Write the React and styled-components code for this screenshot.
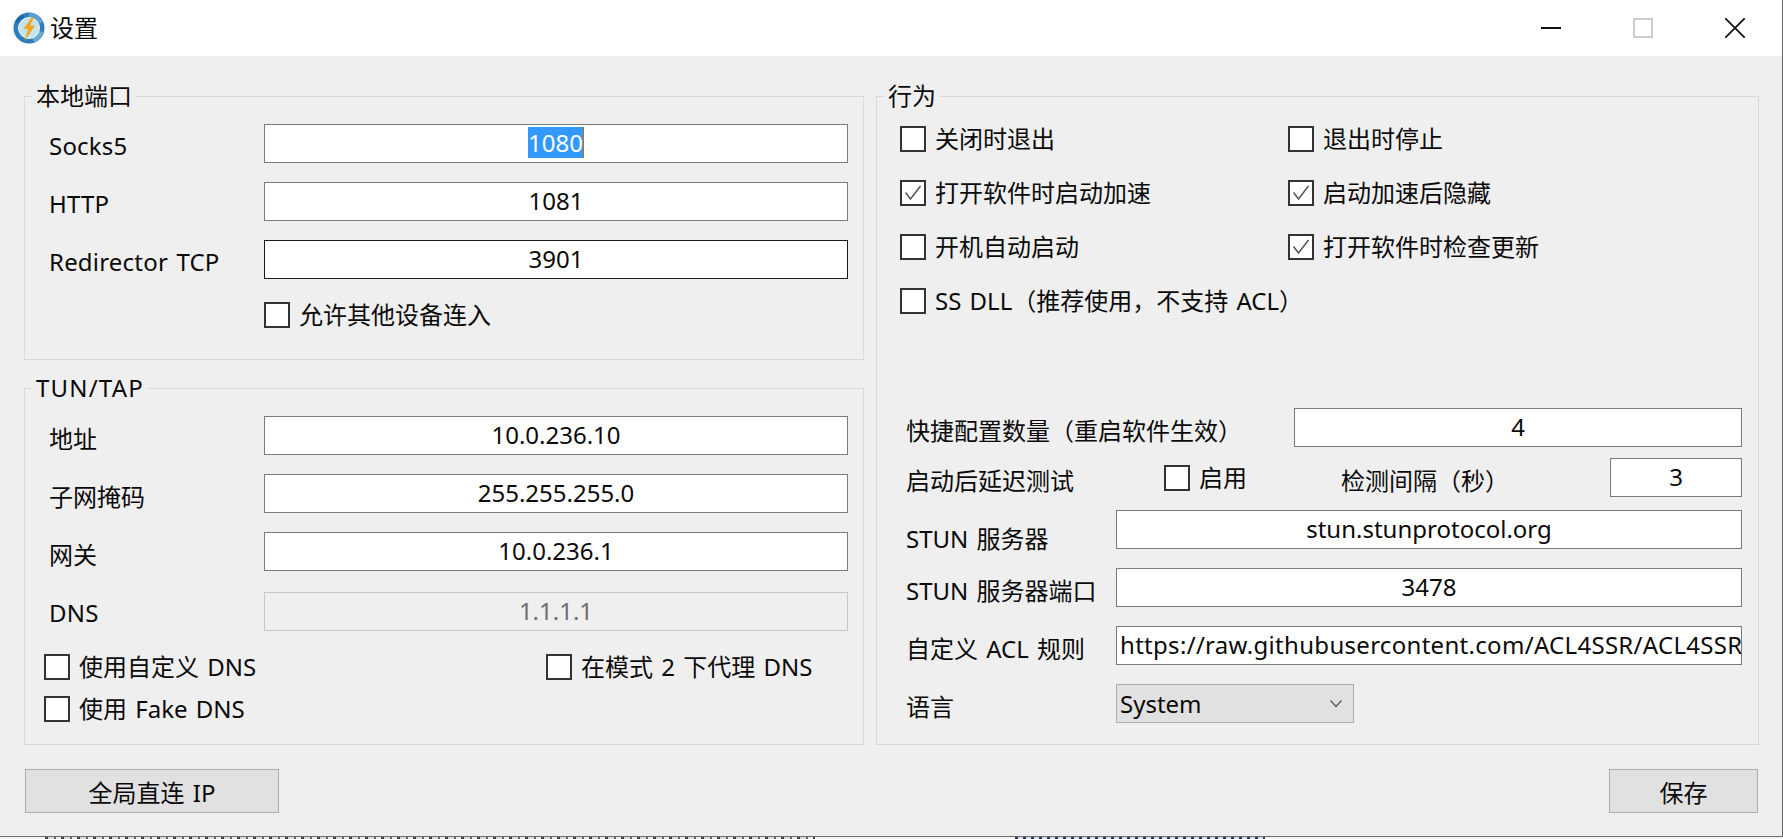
import React from 'react'
import styled, { createGlobalStyle } from 'styled-components'

const GlobalStyle = createGlobalStyle`
  html, body {
    margin: 0;
    height: 100%;
    overflow: hidden;
    background: #fff;
  }
  body {
    font-family: "Noto Sans", "Noto Sans CJK SC", sans-serif;
    font-size: 24px;
    word-spacing: 2px;
    color: #0a0a0a;
  }
`

function AppIcon() {
  return (
    <svg width="34" height="34" viewBox="0 0 34 34">
      <circle cx="17" cy="17" r="15.5" fill="#2f7dbd" />
      <path d="M17 1.5 A15.5 15.5 0 0 1 31 11 L26 13 A10 10 0 0 0 17 7Z" fill="#5fa0d0" />
      <path d="M3 11 A15.5 15.5 0 0 1 11 3 L13 8 A10 10 0 0 0 8 13Z" fill="#1f6aa8" />
      <path d="M31.5 21 A15.5 15.5 0 0 1 22 31.5 L20 26.5 A10 10 0 0 0 26.5 20Z" fill="#6aa8d6" />
      <circle cx="17" cy="17" r="10.5" fill="#c3e4ea" stroke="#e4f3f5" />
      <path d="M19.5 6.5 L11.5 18 L16 18 L12.5 30 L23 14.5 L18 14.5 L22 6.5Z" fill="#f4a51f" />
    </svg>
  )
}

function Check({ checked }) {
  return (
    <Box>
      {checked && (
        <svg width="22" height="22" viewBox="0 0 22 22">
          <polyline points="3.5,10.5 8.5,17 18.5,4" fill="none" stroke="#555" strokeWidth="1.5" />
        </svg>
      )}
    </Box>
  )
}

function Option({ checked, children }) {
  return (
    <OptionRow>
      <Check checked={checked} />
      <OptionText>{children}</OptionText>
    </OptionRow>
  )
}

function App() {
  return (
    <>
      <GlobalStyle />
      <Window>
        <TitleBar>
          <AppIcon />
          <Title>设置</Title>
          <WinButtons>
            <WinButton>
              <svg width="20" height="20" viewBox="0 0 20 20"><path d="M0 10H20" stroke="#111" strokeWidth="2" /></svg>
            </WinButton>
            <WinButton>
              <svg width="20" height="20" viewBox="0 0 20 20"><rect x="1" y="1" width="18" height="18" fill="none" stroke="#ccc" strokeWidth="2" /></svg>
            </WinButton>
            <WinButton>
              <svg width="20" height="20" viewBox="0 0 20 20"><path d="M0 0L20 20M20 0L0 20" stroke="#111" strokeWidth="1.7" /></svg>
            </WinButton>
          </WinButtons>
        </TitleBar>

        <Content>
          <Columns>
            <LeftColumn>
              <Group $height="264px">
                <Legend>本地端口</Legend>
                <FormGrid>
                  <Label $latin>Socks5</Label>
                  <Field><Selected>1080</Selected></Field>
                  <Label $latin>HTTP</Label>
                  <Field>1081</Field>
                  <Label $latin>Redirector TCP</Label>
                  <Field $focus>3901</Field>
                  <span />
                  <LooseOption>
                    <Option>允许其他设备连入</Option>
                  </LooseOption>
                </FormGrid>
              </Group>
              <Group $height="357px">
                <Legend $latin>TUN/TAP</Legend>
                <FormGrid>
                  <Label>地址</Label>
                  <Field>10.0.236.10</Field>
                  <Label>子网掩码</Label>
                  <Field>255.255.255.0</Field>
                  <Label>网关</Label>
                  <Field>10.0.236.1</Field>
                  <Label $latin>DNS</Label>
                  <Field $disabled>1.1.1.1</Field>
                </FormGrid>
                <DnsOptions>
                  <Option>使用自定义 DNS</Option>
                  <Option>在模式 2 下代理 DNS</Option>
                  <Option>使用 Fake DNS</Option>
                </DnsOptions>
              </Group>
            </LeftColumn>

            <BehaviorGroup>
              <Legend>行为</Legend>
              <ChecksGrid>
                <Option>关闭时退出</Option>
                <Option>退出时停止</Option>
                <Option checked>打开软件时启动加速</Option>
                <Option checked>启动加速后隐藏</Option>
                <Option>开机自动启动</Option>
                <Option checked>打开软件时检查更新</Option>
                <Option>SS DLL（推荐使用，不支持 ACL）</Option>
              </ChecksGrid>
              <Settings>
                <SettingRow $col="388px">
                  <Label>快捷配置数量（重启软件生效）</Label>
                  <Field>4</Field>
                </SettingRow>
                <DelayRow>
                  <Label>启动后延迟测试</Label>
                  <Option>启用</Option>
                  <Label>检测间隔（秒）</Label>
                  <Field>3</Field>
                </DelayRow>
                <SettingRow $tight>
                  <Label $low>STUN 服务器</Label>
                  <Field>stun.stunprotocol.org</Field>
                </SettingRow>
                <SettingRow>
                  <Label>STUN 服务器端口</Label>
                  <Field>3478</Field>
                </SettingRow>
                <SettingRow>
                  <Label>自定义 ACL 规则</Label>
                  <Field $url>https://raw.githubusercontent.com/ACL4SSR/ACL4SSR</Field>
                </SettingRow>
                <SettingRow>
                  <Label>语言</Label>
                  <Select>
                    <span>System</span>
                    <svg width="12" height="8" viewBox="0 0 12 8">
                      <polyline points="0.5,0.5 6,6.5 11.5,0.5" fill="none" stroke="#555" strokeWidth="1.2" />
                    </svg>
                  </Select>
                </SettingRow>
              </Settings>
            </BehaviorGroup>
          </Columns>
          <Footer>
            <ActionButton $width="254px">全局直连 IP</ActionButton>
            <ActionButton $width="149px">保存</ActionButton>
          </Footer>
        </Content>
      </Window>
      <BehindStrip />
    </>
  )
}

export default App

const Window = styled.div`
  width: 1782px;
  height: 836px;
  display: flex;
  flex-direction: column;
  border-right: 1px solid #666;
  border-bottom: 1px solid #6d6d6d;
`

const TitleBar = styled.header`
  height: 56px;
  flex: none;
  display: flex;
  align-items: center;
  padding-left: 12px;
  background: #fff;
`

const Title = styled.div`
  margin-left: 4px;
  line-height: 34px;
`

const WinButtons = styled.div`
  margin-left: auto;
  padding-right: 1px;
  display: flex;
`

const WinButton = styled.div`
  width: 92px;
  height: 56px;
  display: flex;
  align-items: center;
  justify-content: center;
`

const Content = styled.main`
  flex: 1;
  background: #efefef;
  padding: 40px 23px 0 24px;
  display: flex;
  flex-direction: column;
`

const Columns = styled.div`
  display: grid;
  grid-template-columns: 840px 883px;
  column-gap: 12px;
  height: 649px;
`

const LeftColumn = styled.div`
  display: flex;
  flex-direction: column;
  justify-content: space-between;
`

const Group = styled.section`
  position: relative;
  box-sizing: border-box;
  height: ${p => p.$height};
  border: 1px solid #d9d9d9;
  padding: 27px 14px 0 24px;
`

const BehaviorGroup = styled(Group)`
  height: 649px;
  padding: 29px 15px 21px 23px;
  display: flex;
  flex-direction: column;
`

const Legend = styled.div`
  position: absolute;
  top: -18px;
  left: 7px;
  padding: 0 4px;
  line-height: 34px;
  letter-spacing: ${p => (p.$latin ? '1.2px' : '0')};
  background: #efefef;
`

const FormGrid = styled.div`
  display: grid;
  grid-template-columns: 215px 584px;
  row-gap: 19px;
  align-items: center;
`

const Label = styled.div`
  white-space: nowrap;
  padding-top: ${p => (p.$low ? '9px' : '3px')};
  margin-bottom: ${p => (p.$low ? '-6px' : '0')};
  letter-spacing: ${p => (p.$latin ? '.2px' : '0')};
`

const Field = styled.div`
  box-sizing: border-box;
  height: 39px;
  min-width: 0;
  margin-top: ${p => (p.$disabled ? '2px' : '0')};
  background: ${p => (p.$disabled ? '#efefef' : '#fff')};
  border: 1px solid ${p => (p.$focus ? '#1a1a1a' : p.$disabled ? '#c6c6c6' : '#7a7a7a')};
  color: ${p => (p.$disabled ? '#6d6d6d' : 'inherit')};
  display: flex;
  align-items: center;
  justify-content: ${p => (p.$url ? 'flex-start' : 'center')};
  letter-spacing: ${p => (p.$url ? '.3px' : '0')};
  padding: 0 3px 2px;
  white-space: nowrap;
  overflow: hidden;
`

const Selected = styled.span`
  background: #3399ff;
  color: #fff;
  line-height: 31px;
  border-right: 1px solid #c96a00;
`

const OptionRow = styled.label`
  display: flex;
  align-items: center;
  gap: 9px;
  height: 26px;
  white-space: nowrap;
`

const OptionText = styled.span`
  margin-bottom: 3px;
`

const LooseOption = styled.div`
  margin-top: 4px;
`

const Box = styled.span`
  box-sizing: border-box;
  width: 26px;
  height: 26px;
  flex: none;
  background: #fff;
  border: 2px solid #333;
  display: flex;
`

const DnsOptions = styled.div`
  display: grid;
  grid-template-columns: 502px 1fr;
  gap: 16px 0;
  margin: 23px 0 0 -5px;
`

const ChecksGrid = styled.div`
  display: grid;
  grid-template-columns: 388px 1fr;
  row-gap: 28px;
`

const Settings = styled.div`
  margin-top: auto;
  display: flex;
  flex-direction: column;
  gap: 19px;
  padding-left: 6px;
`

const SettingRow = styled.div`
  display: grid;
  grid-template-columns: ${p => p.$col || '210px'} 1fr;
  align-items: center;
  margin-top: ${p => (p.$tight ? '-6px' : '0')};
  margin-right: 1px;
`

const DelayRow = styled.div`
  display: grid;
  grid-template-columns: 258px 177px 269px 132px;
  align-items: center;
  margin-top: -8px;
  margin-right: 1px;
`

const Select = styled.div`
  box-sizing: border-box;
  width: 238px;
  height: 39px;
  background: #e1e1e1;
  border: 1px solid #adadad;
  display: flex;
  align-items: center;
  justify-content: space-between;
  padding: 0 11px 0 3px;
`

const Footer = styled.footer`
  display: flex;
  justify-content: space-between;
  margin: 24px 1px 0;
`

const ActionButton = styled.button`
  width: ${p => p.$width};
  height: 44px;
  background: #e1e1e1;
  border: 1px solid #adadad;
  font: inherit;
  word-spacing: inherit;
  color: inherit;
  padding: 0;
`

const BehindStrip = styled.div`
  height: 2px;
  background:
    repeating-linear-gradient(90deg, #444 0 3px, #dcdcdc 3px 9px, #666 9px 11px, #eee 11px 16px) 45px 0 / 770px 100% no-repeat,
    repeating-linear-gradient(90deg, #27336b 0 3px, #dcdcdc 3px 8px) 1015px 0 / 250px 100% no-repeat,
    #f4f4f4;
`
